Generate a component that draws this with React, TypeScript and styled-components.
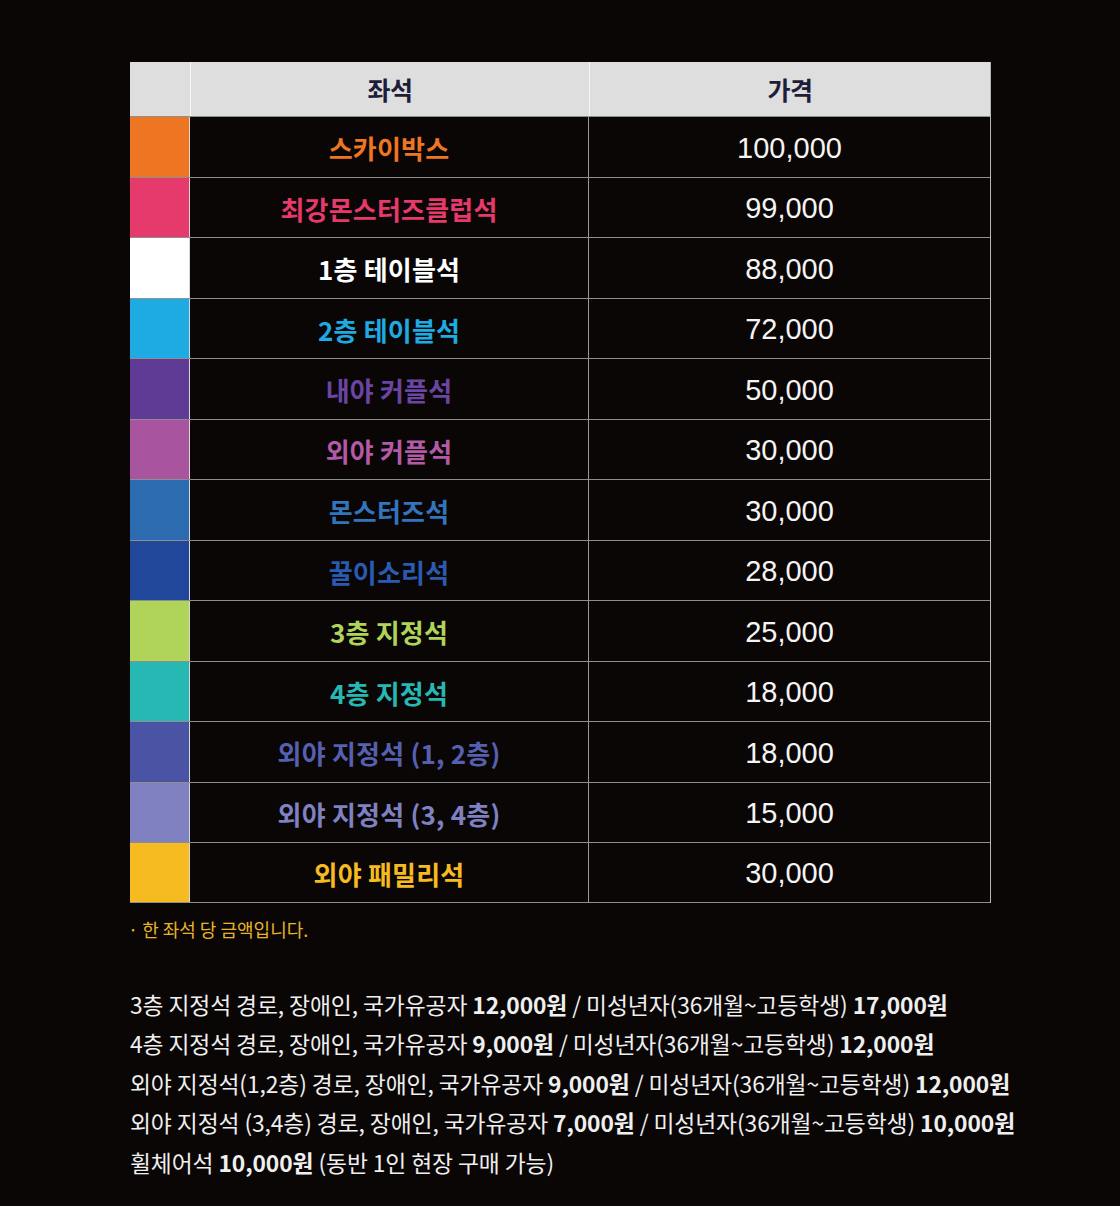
import styled, { createGlobalStyle } from 'styled-components';

const GlobalStyle = createGlobalStyle`
  body {
    margin: 0;
    background: #0a0606;
    font-family: "Noto Sans CJK KR", "Noto Sans", sans-serif;
  }
`;

const Page = styled.main`
  width: 1120px;
  min-height: 1206px;
  box-sizing: border-box;
  padding: 62px 0 0 130px;
  background: #0a0606;
`;

const Table = styled.div`
  width: 860px;
  border-right: 1px solid #b5b5b5;
`;

const HeaderRow = styled.div`
  display: grid;
  grid-template-columns: 60px 399px 1fr;
  height: 54px;
  background: #dedede;
`;

const HeaderCell = styled.div<{ $divider?: boolean }>`
  display: flex;
  align-items: center;
  justify-content: center;
  border-left: ${({ $divider }) => ($divider ? '1px solid #f6f6f6' : 'none')};
  font-size: 25px;
  font-weight: 700;
  color: #1d1d3a;
  letter-spacing: -0.5px;
`;

const Row = styled.div`
  display: grid;
  grid-template-columns: 60px 399px 1fr;
  height: 60.5px;
  box-sizing: border-box;
  border-top: 1px solid #8e8e8e;

  &:last-child {
    border-bottom: 1px solid #8e8e8e;
  }
`;

const Swatch = styled.div<{ $color: string }>`
  background: ${({ $color }) => $color};
  border-right: 1px solid #d8d8d8;
`;

const SeatName = styled.div<{ $color: string }>`
  display: flex;
  align-items: center;
  justify-content: center;
  padding-top: 2px;
  border-right: 1px solid #9a9a9a;
  color: ${({ $color }) => $color};
  font-size: 26px;
  font-weight: 700;
  letter-spacing: 0.2px;
`;

const Price = styled.div`
  display: flex;
  align-items: center;
  justify-content: center;
  padding-top: 3px;
  color: #f4f4f4;
  font-family: "Liberation Sans", Arial, sans-serif;
  font-size: 29px;
`;

const Note = styled.p`
  margin: 14px 0 0 -2px;
  color: #e7b52a;
  font-size: 18px;
  line-height: 24px;
`;

const Discounts = styled.div`
  margin-top: 44px;
  color: #efefef;
  font-size: 22.8px;
  line-height: 39.5px;
  letter-spacing: -0.1px;
`;

const Line = styled.div`
  white-space: nowrap;
`;

const Strong = styled.b`
  font-weight: 700;
`;

type Seat = { name: string; color: string; text?: string; price: string };

const seats: Seat[] = [
  { name: '스카이박스', color: '#ee7623', price: '100,000' },
  { name: '최강몬스터즈클럽석', color: '#e6396c', price: '99,000' },
  { name: '1층 테이블석', color: '#ffffff', price: '88,000' },
  { name: '2층 테이블석', color: '#1eaae2', price: '72,000' },
  { name: '내야 커플석', color: '#5f3b95', text: '#6a45a3', price: '50,000' },
  { name: '외야 커플석', color: '#a8549f', text: '#b25aa6', price: '30,000' },
  { name: '몬스터즈석', color: '#2d6bb1', text: '#3274bd', price: '30,000' },
  { name: '꿀이소리석', color: '#21479b', text: '#2a5bb0', price: '28,000' },
  { name: '3층 지정석', color: '#b0d45a', price: '25,000' },
  { name: '4층 지정석', color: '#28b8b4', price: '18,000' },
  { name: '외야 지정석 (1, 2층)', color: '#4b54a4', text: '#5560ae', price: '18,000' },
  { name: '외야 지정석 (3, 4층)', color: '#7f81c1', price: '15,000' },
  { name: '외야 패밀리석', color: '#f5bb20', price: '30,000' },
];

const discounts: { label: string; elder: string; minor: string }[] = [
  { label: '3층 지정석', elder: '12,000원', minor: '17,000원' },
  { label: '4층 지정석', elder: '9,000원', minor: '12,000원' },
  { label: '외야 지정석(1,2층)', elder: '9,000원', minor: '12,000원' },
  { label: '외야 지정석 (3,4층)', elder: '7,000원', minor: '10,000원' },
];

export default function App() {
  return (
    <>
      <GlobalStyle />
      <Page>
        <Table>
          <HeaderRow>
            <HeaderCell />
            <HeaderCell $divider>좌석</HeaderCell>
            <HeaderCell $divider>가격</HeaderCell>
          </HeaderRow>
          {seats.map((seat) => (
            <Row key={seat.name}>
              <Swatch $color={seat.color} />
              <SeatName $color={seat.text ?? seat.color}>{seat.name}</SeatName>
              <Price>{seat.price}</Price>
            </Row>
          ))}
        </Table>

        <Note>· 한 좌석 당 금액입니다.</Note>

        <Discounts>
          {discounts.map((d) => (
            <Line key={d.label}>
              {d.label} 경로, 장애인, 국가유공자 <Strong>{d.elder}</Strong> / 미성년자(36개월~고등학생){' '}
              <Strong>{d.minor}</Strong>
            </Line>
          ))}
          <Line>
            휠체어석 <Strong>10,000원</Strong> (동반 1인 현장 구매 가능)
          </Line>
        </Discounts>
      </Page>
    </>
  );
}
